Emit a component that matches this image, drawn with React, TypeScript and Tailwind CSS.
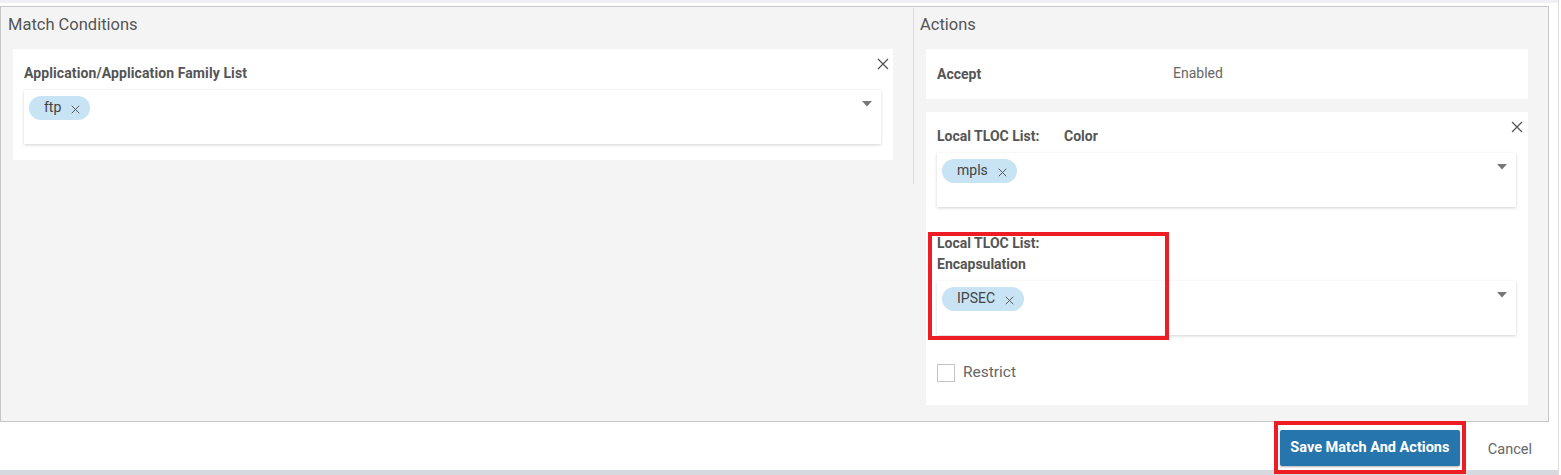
import React from 'react';

function CloseIcon({ size = 13, className = '' }: { size?: number; className?: string }) {
  return (
    <svg width={size} height={size} viewBox="0 0 12 12" className={className}>
      <path d="M1 1L11 11M11 1L1 11" stroke="currentColor" strokeWidth="1.3" fill="none" />
    </svg>
  );
}

function Caret() {
  return (
    <svg width="10" height="6" viewBox="0 0 10 6" className="text-[#777]">
      <path d="M0 0H10L5 5.5Z" fill="currentColor" />
    </svg>
  );
}

function Chip({ label }: { label: string }) {
  return (
    <span className="inline-flex h-[24px] items-center rounded-full bg-[#c8e3f4] pl-[15px] pr-[10px] text-[14px] text-[#444]">
      <span className="-mt-[2px]">{label}</span>
      <CloseIcon size={9} className="ml-[10px] mt-[2px] text-[#555]" />
    </span>
  );
}

function MultiSelect({ value }: { value: string }) {
  return (
    <div className="flex h-[54px] items-start justify-between bg-white pl-[5px] pr-[9px] pt-[6px] shadow-[0_1px_3px_rgba(0,0,0,0.18)]">
      <Chip label={value} />
      <div className="pt-[5px]">
        <Caret />
      </div>
    </div>
  );
}

export default function App() {
  return (
    <div className="flex h-[475px] w-[1561px] bg-white font-['Roboto',sans-serif] text-[#555]">
      <div className="flex w-[1558px] flex-col">
        <div className="h-[3px] bg-[#edf1f6]" />
        <div className="h-[3px]" />
        {/* main box */}
        <div className="flex h-[417px] w-[1549px] border border-[#c6c6c6] bg-[#f4f4f4]">
          {/* match conditions */}
          <div className="w-[912px] pl-[7px] pt-[6px]">
            <div className="h-[24px] text-[16.5px] leading-[24px] text-[#555]">Match Conditions</div>
            <div className="relative ml-[5px] mt-[12px] w-[880px] bg-white px-[11px] pb-[16px] pt-[16px]">
              <CloseIcon size={12} className="absolute right-[4px] top-[9px] text-[#555]" />
              <div className="text-[14px] font-bold leading-[16px] tracking-[0.1px]">Application/Application Family List</div>
              <div className="mt-[9px] w-[857px]">
                <MultiSelect value="ftp" />
              </div>
            </div>
          </div>
          <div className="mt-[1px] h-[176px] w-px bg-[#dcdcdc]" />
          {/* actions */}
          <div className="flex-1 pl-[6px] pr-[20px] pt-[6px]">
            <div className="h-[24px] text-[16.5px] leading-[24px] text-[#555]">Actions</div>
            <div className="ml-[6px] mt-[12px] flex h-[50px] items-center bg-white pl-[11px]">
              <span className="w-[236px] text-[14px] font-bold">Accept</span>
              <span className="-mt-[2px] text-[14px] text-[#666]">Enabled</span>
            </div>
            <div className="relative ml-[6px] mt-[13px] h-[293px] bg-white pl-[11px] pr-[12px] pt-[16px]">
              <CloseIcon size={12} className="absolute right-[5px] top-[9px] text-[#555]" />
              <div className="flex text-[14px] font-bold leading-[16px]">
                <span className="w-[127px]">Local TLOC List:</span>
                <span>Color</span>
              </div>
              <div className="mt-[9px]">
                <MultiSelect value="mpls" />
              </div>
              <div className="mt-[26px] text-[14px] font-bold leading-[21px]">
                <div>Local TLOC List:</div>
                <div>Encapsulation</div>
              </div>
              <div className="mt-[6px]">
                <MultiSelect value="IPSEC" />
              </div>
              <label className="mt-[26px] flex items-center">
                <span className="h-[18px] w-[18px] border border-[#c4c4c4] bg-white" />
                <span className="ml-[8px] text-[15.5px] text-[#666]">Restrict</span>
              </label>
              <div className="pointer-events-none absolute left-[2px] top-[120px] h-[108px] w-[241px] border-[4px] border-[#ee1c25]" />
            </div>
          </div>
        </div>
        {/* footer */}
        <div className="relative z-10 flex h-[48px] items-start justify-end">
          <div className="-mt-[1px] flex h-[53px] w-[192px] items-center justify-center border-[4px] border-[#ee1c25] bg-white">
            <button className="mt-[1px] h-[36px] w-[180px] rounded-[2px] bg-[#2775ad] text-[14.5px] font-bold text-white shadow-[0_1px_2px_rgba(0,0,0,0.3)]">
              Save Match And Actions
            </button>
          </div>
          <div className="ml-[22px] mr-[26px] pt-[17px] text-[14.5px] text-[#666]">Cancel</div>
        </div>
        <div className="h-[5px] bg-[#d6d9de]" />
      </div>
      <div className="w-px bg-[#dedede]" />
      <div className="flex-1 bg-white" />
    </div>
  );
}
